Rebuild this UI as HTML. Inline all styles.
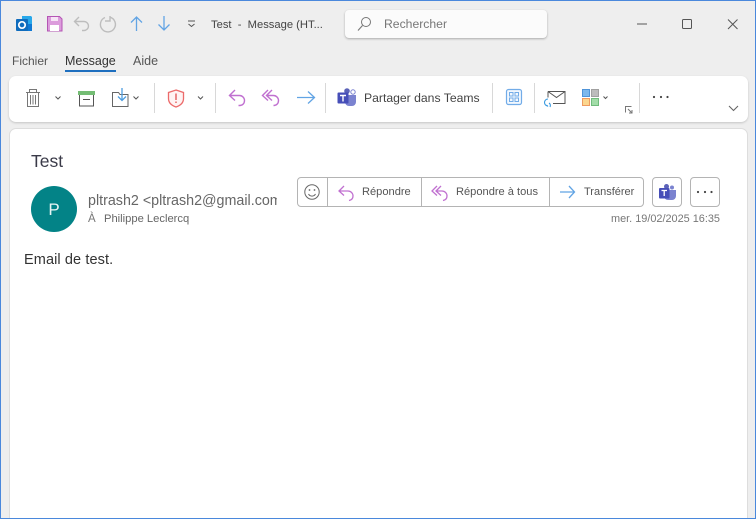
<!DOCTYPE html>
<html lang="fr"><head><meta charset="utf-8"><title>Test - Message</title>
<style>
html,body{margin:0;padding:0;width:756px;height:519px;overflow:hidden;background:#eee}
body{position:relative;font-family:"Liberation Sans",sans-serif;color:#444}
.a{position:absolute;white-space:nowrap;line-height:1}
.box{position:absolute;box-sizing:border-box}
svg{position:absolute;left:0;top:0}
</style></head><body>
<div class="box" style="left:9px;top:76px;width:739px;height:46px;background:#fff;border-radius:7px;box-shadow:0 1px 2px #c4c4c4"></div>
<div class="box" style="left:9px;top:128px;width:739px;height:400px;background:#fff;border-radius:7px;border:1px solid #ddd"></div>
<div class="box" style="left:345px;top:10px;width:202px;height:28px;background:#fbfbfb;border-radius:4px;box-shadow:0 1px 2px #aaa"></div>

<div class="a" style="left:211px;top:20px;font-size:11.2px;color:#444">Test&nbsp; -&nbsp; Message (HT...</div>
<div class="a" style="left:384px;top:18px;font-size:12.2px;color:#777">Rechercher</div>
<div class="a" style="left:12px;top:55px;font-size:12px;color:#555">Fichier</div>
<div class="a" style="left:65px;top:55px;font-size:12.5px;color:#333">Message</div>
<div class="box" style="left:65px;top:70px;width:51px;height:2px;background:#1e6fbf"></div>
<div class="a" style="left:133px;top:55px;font-size:12.5px;color:#555">Aide</div>
<div class="a" style="left:364px;top:92px;font-size:12.2px;color:#444">Partager dans Teams</div>

<div class="a" style="left:31px;top:153px;font-size:17.5px;color:#3a3a48">Test</div>
<div class="box" style="left:31px;top:186px;width:46px;height:46px;border-radius:50%;background:#038387"></div>
<div class="a" style="left:31px;top:201px;width:46px;text-align:center;font-size:17px;color:#e8f4f4">P</div>
<div class="a" style="left:88px;top:194px;width:189px;overflow:hidden;font-size:14.3px;color:#666">pltrash2 &lt;pltrash2@gmail.com&gt;</div>
<div class="a" style="left:88px;top:214px;font-size:11.5px;color:#777">À</div>
<div class="a" style="left:104px;top:214px;font-size:11.2px;color:#666">Philippe Leclercq</div>
<div class="a" style="left:24px;top:253px;font-size:14.5px;color:#333;letter-spacing:.1px">Email de test.</div>

<div class="box" style="left:297px;top:177px;width:347px;height:30px;border:1px solid #b4b4b4;border-radius:4px"></div>
<div class="box" style="left:327px;top:177px;width:1px;height:30px;background:#b4b4b4"></div>
<div class="box" style="left:421px;top:177px;width:1px;height:30px;background:#b4b4b4"></div>
<div class="box" style="left:549px;top:177px;width:1px;height:30px;background:#b4b4b4"></div>
<div class="box" style="left:652px;top:177px;width:30px;height:30px;border:1px solid #b4b4b4;border-radius:4px"></div>
<div class="box" style="left:690px;top:177px;width:30px;height:30px;border:1px solid #b4b4b4;border-radius:4px"></div>
<div class="a" style="left:362px;top:187px;font-size:11.1px;color:#555">Répondre</div>
<div class="a" style="left:456px;top:187px;font-size:11.1px;color:#555">Répondre à tous</div>
<div class="a" style="left:584px;top:187px;font-size:11px;color:#555">Transférer</div>
<div class="a" style="left:611px;top:214px;font-size:10.9px;color:#777">mer. 19/02/2025 16:35</div>

<svg width="756" height="519" viewBox="0 0 756 519" fill="none">
<!-- window border -->
<rect x=".5" y=".5" width="755" height="518" stroke="#4a88dc"/>
<!-- outlook -->
<path d="M22 16h9l1 1v14H22z" fill="#28a8ea"/><path d="M24 24h8v7h-8z" fill="#0f78d4"/>
<rect x="16" y="19" width="12" height="12" rx="1" fill="#0f6cbd"/>
<circle cx="22" cy="25" r="3.200" stroke="#fff" stroke-width="1.700"/>
<!-- save -->
<path d="M47.500 16.500h12l2.500 2.500v12h-14.500z" fill="#dc9cdc" stroke="#b455b4"/>
<rect x="51" y="17" width="7" height="4" fill="#f6e4f6"/><rect x="50" y="25" width="9" height="6" fill="#fff"/>
<!-- undo redo -->
<path d="M79 17l-4.500 4.500 4.500 4.500M75 21.500h9a4.500 4.500 0 0 1 0 9h-2" stroke="#bdbdbd" stroke-width="1.400"/>
<path d="M105 17.500a7.500 7.500 0 1 0 5-.3M110 16v5h-5" stroke="#bdbdbd" stroke-width="1.400"/>
<!-- arrows -->
<path d="M136.500 31V17M131 22.500l5.500-5.500 5.500 5.500" stroke="#62a4e4" stroke-width="1.300"/>
<path d="M164 16v14M158.500 24.500l5.500 5.500 5.500-5.500" stroke="#62a4e4" stroke-width="1.300"/>
<path d="M188 21h7M188.500 24l3 2.500 3-2.500" stroke="#555"/>
<!-- search -->
<circle cx="366" cy="22" r="4.500" stroke="#777"/><path d="M362.500 25.500L358 30.500" stroke="#777" stroke-width="1.100"/>
<!-- window controls -->
<path d="M637 24h10" stroke="#555"/><rect x="682.500" y="19.500" width="9" height="9" rx="1" stroke="#555"/><path d="M728 19.500l9.500 9.500M737.500 19.500L728 29" stroke="#555"/>

<!-- trash -->
<path d="M26 92.500h14M29.500 92.500v-3h7v3M27.500 92.500v14h11v-14M30.500 95v9.500M33 95v9.500M35.500 95v9.500" stroke="#777"/>
<path d="M55.500 96.500l2.500 2.500 2.500-2.500" stroke="#555"/>
<!-- archive -->
<rect x="78" y="91" width="17" height="4" fill="#74bd74"/><path d="M79.500 95v11h14V95M83 99.500h7" stroke="#555"/>
<!-- move -->
<path d="M112.500 92.500h6l1.500 2h8v12h-15.500z" stroke="#666" fill="#fff"/>
<path d="M122 88v12M118 96.500l4 4 4-4" stroke="#4d9de0" stroke-width="1.300"/>
<path d="M133.500 96.500l2.500 2.500 2.500-2.500" stroke="#555"/>
<path d="M154.500 83v30M215.500 83v30M325.500 83v30M492.500 83v30M534.500 83v30M639.500 83v30" stroke="#d8d8d8"/>
<!-- shield -->
<path d="M176 90l7.500 2.500v6c0 4-3 7-7.500 8.500-4.500-1.500-7.500-4.500-7.500-8.500v-6z" stroke="#ec6a6a" stroke-width="1.300" fill="#fff3f3"/>
<path d="M176 93.500v6.500M176 101.500v1.500" stroke="#e05050" stroke-width="1.300"/>
<path d="M198 96.500l2.500 2.500 2.500-2.500" stroke="#555"/>
<!-- reply ribbon -->
<path d="M235 90l-5.500 5.500 5.500 5M229.500 95.500h10a5 5 0 0 1 5 5c0 3-2 5-5 5h-1" stroke="#c070d0" stroke-width="1.400"/>
<path d="M268 90l-5.500 5.500 5.500 5M272 90l-5.500 5.500 5.500 5M266.500 95.500h7a5 5 0 0 1 5 5c0 3-2 5-5 5" stroke="#c070d0" stroke-width="1.400"/>
<path d="M297 97.500h17M308 91.500l6.500 6-6.500 6" stroke="#62a4e4" stroke-width="1.300"/>
<!-- teams ribbon -->
<circle cx="353" cy="92" r="2.200" stroke="#7b83d0"/><circle cx="347" cy="91" r="2.800" fill="#5c63b8"/>
<path d="M345 95h11v7a4 4 0 0 1-4 4h-3a4 4 0 0 1-4-4z" fill="#7b83d0"/>
<rect x="337.500" y="92.500" width="11" height="11" rx="1" fill="#464eb8"/><path d="M340 95.500h6M343 95.500v6" stroke="#fff" stroke-width="1.400"/>
<!-- apps -->
<rect x="506.500" y="89.500" width="15" height="15" rx="2" stroke="#72ace8" stroke-width="1.200" fill="#f2f8fe"/>
<rect x="509.500" y="92.500" width="3.500" height="3.500" stroke="#72ace8"/><rect x="515" y="92.500" width="3.500" height="3.500" stroke="#72ace8"/>
<rect x="509.500" y="98" width="3.500" height="3.500" stroke="#72ace8"/><rect x="515" y="98" width="3.500" height="3.500" stroke="#72ace8"/>
<!-- mail -->
<path d="M548 91.500h17v12h-12M548 91.500l8.500 6 8.500-6M548 91.500v6" stroke="#555"/>
<path d="M548 99a3.500 3.500 0 0 0 0 7M549 103a3 3 0 0 1 1 4M546.500 105l1.500 1.500" stroke="#3a9ae0" stroke-width="1.100"/>
<!-- tiles -->
<rect x="582.500" y="89.500" width="7" height="7" fill="#7db8ec" stroke="#4f94d8"/><rect x="591.500" y="89.500" width="7" height="7" fill="#bcbcbc" stroke="#a0a0a0"/>
<rect x="582.500" y="98.500" width="7" height="7" fill="#fbd68e" stroke="#ee9a60"/><rect x="591.500" y="98.500" width="7" height="7" fill="#a2dca8" stroke="#70bb7c"/>
<path d="M603.500 96.500l2 2 2-2" stroke="#555"/>
<path d="M625.500 112.500v-6h6M628 109l4 4M632 110v3h-3" stroke="#777"/>
<circle cx="654" cy="97" r="1.100" fill="#444"/><circle cx="661" cy="97" r="1.100" fill="#444"/><circle cx="667.500" cy="97" r="1.100" fill="#444"/>
<path d="M729 106l4.500 4.500 4.500-4.500" stroke="#666" stroke-width="1.100"/>

<!-- message actions -->
<circle cx="312" cy="192" r="7.200" stroke="#666"/><circle cx="309.500" cy="190" r=".9" fill="#666"/><circle cx="314.500" cy="190" r=".9" fill="#666"/><path d="M308.500 194a4 4 0 0 0 7 0" stroke="#666"/>
<path d="M344 186l-5 5 5 4.500M339 191h9a5 5 0 0 1 5 5c0 2.500-1.500 4-4 4.500" stroke="#c070d0" stroke-width="1.300"/>
<path d="M437 186l-5 5 5 4.500M441 186l-5 5 5 4.500M436 191h6a5 5 0 0 1 5 5c0 2.500-1.500 4-4 4.500" stroke="#c070d0" stroke-width="1.300"/>
<path d="M560 192h14M569 186l5.500 6-5.500 6" stroke="#62a4e4" stroke-width="1.300"/>
<!-- teams small -->
<circle cx="672" cy="187.500" r="2" fill="#7b83d0"/><circle cx="666.500" cy="186.500" r="2.500" fill="#5c63b8"/>
<path d="M664 190h12v6a4 4 0 0 1-4 4h-4a4 4 0 0 1-4-4z" fill="#7b83d0"/>
<rect x="659" y="188" width="10.500" height="10.500" rx="1" fill="#464eb8"/><path d="M661.500 190.500h5.500M664.200 190.500v5.500" stroke="#fff" stroke-width="1.300"/>
<circle cx="698" cy="192" r="1.100" fill="#444"/><circle cx="705" cy="192" r="1.100" fill="#444"/><circle cx="711.500" cy="192" r="1.100" fill="#444"/>
</svg>
</body></html>
